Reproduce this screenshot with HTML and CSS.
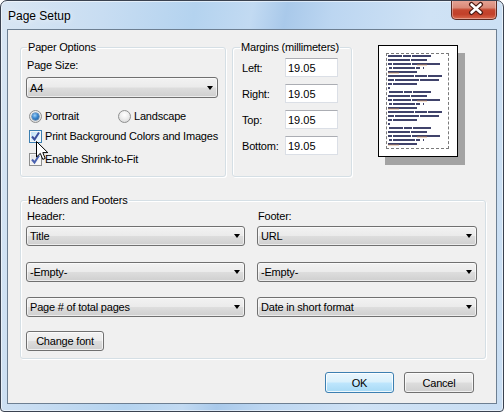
FILE: index.html
```html
<!DOCTYPE html>
<html lang="en">
<head>
  <meta charset="UTF-8">
  <title>Page Setup</title>
  <link rel="stylesheet" href="styles.css">
</head>
<body>
  <div class="window">
    <div class="titlebar">
      <span class="title">Page Setup</span>
      <button class="close" aria-label="Close">
        <svg width="46" height="20" viewBox="0 0 46 20">
          <path d="M19.5 5.5 L28.5 13.5 M28.5 5.5 L19.5 13.5" stroke="#4a1a12" stroke-width="5" stroke-linecap="round"/>
          <path d="M19.5 5.5 L28.5 13.5 M28.5 5.5 L19.5 13.5" stroke="#fff" stroke-width="2.6" stroke-linecap="round"/>
        </svg>
      </button>
    </div>

    <div class="client">
      <div class="top">
        <fieldset class="group paper">
          <legend>Paper Options</legend>
          <label class="lbl">Page Size:</label>
          <div class="combo tall">A4</div>
          <div class="radios">
            <span class="opt first"><span class="radio on"></span>Portrait</span>
            <span class="opt"><span class="radio"></span>Landscape</span>
          </div>
          <div class="check hot">
            <span class="box"><svg width="11" height="11" viewBox="0 0 11 11"><path d="M2 5.5 L4.5 8.5 L9 1.5" fill="none" stroke="#3a4f9e" stroke-width="2"/></svg></span>
            Print Background Colors and Images
          </div>
          <div class="check second">
            <span class="box"><svg width="11" height="11" viewBox="0 0 11 11"><path d="M2 5.5 L4.5 8.5 L9 1.5" fill="none" stroke="#4a62b0" stroke-width="2"/></svg></span>
            Enable Shrink-to-Fit
          </div>
        </fieldset>

        <fieldset class="group margins">
          <legend>Margins (millimeters)</legend>
          <div class="mrow"><label>Left:</label><input type="text" value="19.05"></div>
          <div class="mrow"><label>Right:</label><input type="text" value="19.05"></div>
          <div class="mrow"><label>Top:</label><input type="text" value="19.05"></div>
          <div class="mrow"><label>Bottom:</label><input type="text" value="19.05"></div>
        </fieldset>

        <div class="preview">
          <div class="page">
            <div class="printable">
              <svg width="61" height="94" viewBox="0 0 61 94">
                <g stroke="#2c2f5c" stroke-width="2">
                  <path d="M1 2 H44" stroke-dasharray="14 1 8 1 20"/>
                  <path d="M1 6 H40" stroke-dasharray="22 1 16"/>
                  <path d="M1 10 H53" stroke-dasharray="4 1 18 1 28"/>
                  <path d="M2 14 H48" stroke-dasharray="3 1 22 1 4"/>
                  <path d="M1 18 H30"/>
                  <path d="M1 22 H55" stroke-dasharray="26 1 12 1 14"/>
                  <path d="M1 26 H52" stroke-dasharray="6 1 24 1 20"/>
                  <path d="M1 30 H30" stroke-dasharray="4 1 25"/>
                  <path d="M1 34 H3"/>
                  <path d="M2 38 H44" stroke-dasharray="14 1 8 1 20"/>
                  <path d="M1 42 H40" stroke-dasharray="22 1 16"/>
                  <path d="M1 46 H53" stroke-dasharray="4 1 18 1 28"/>
                  <path d="M2 50 H48" stroke-dasharray="3 1 22 1 4"/>
                  <path d="M1 54 H30"/>
                  <path d="M1 58 H55" stroke-dasharray="26 1 12 1 14"/>
                  <path d="M1 62 H52" stroke-dasharray="6 1 24 1 20"/>
                  <path d="M1 66 H30" stroke-dasharray="4 1 25"/>
                  <path d="M1 70 H3"/>
                  <path d="M2 74 H44" stroke-dasharray="14 1 8 1 20"/>
                  <path d="M1 78 H40" stroke-dasharray="22 1 16"/>
                  <path d="M1 82 H53" stroke-dasharray="4 1 18 1 28"/>
                  <path d="M2 86 H48" stroke-dasharray="3 1 22 1 4"/>
                  <path d="M1 90 H30"/>
                </g>
                <g stroke="#d08a4a" stroke-width="1" opacity="0.7">
                  <path d="M1 19 H12 M1 55 H12 M1 91 H12"/>
                  <path d="M30 11 H40 M30 47 H40 M30 83 H40"/>
                </g>
              </svg>
            </div>
          </div>
        </div>
      </div>

      <fieldset class="group hf">
        <legend>Headers and Footers</legend>
        <div class="hf-grid">
          <label class="lbl">Header:</label>
          <label class="lbl">Footer:</label>
          <div class="combo">Title</div>
          <div class="combo">URL</div>
          <div class="combo">-Empty-</div>
          <div class="combo">-Empty-</div>
          <div class="combo">Page # of total pages</div>
          <div class="combo">Date in short format</div>
        </div>
        <button class="btn font-btn">Change font</button>
      </fieldset>

      <div class="actions">
        <button class="btn ok">OK</button>
        <button class="btn cancel">Cancel</button>
      </div>

      <!-- mouse pointer over the first checkbox -->
      <svg class="cursor" width="13" height="20" viewBox="0 0 13 20">
        <path d="M0.5 0.5 L0.5 16 L4.3 12.4 L6.8 18.4 L9.2 17.4 L6.8 11.6 L11.8 11.6 Z" fill="#fff" stroke="#000" stroke-width="1"/>
      </svg>
    </div>
  </div>
</body>
</html>
```

FILE: styles.css
```css
/* base */
* { box-sizing: border-box; }
body {
  margin: 0;
  background: #fff;
  font-family: "Liberation Sans", Arial, sans-serif;
  font-size: 11px;
  letter-spacing: -0.2px;
  color: #000;
}

/* window frame */
.window {
  width: 504px;
  height: 412px;
  border: 1px solid #3a4250;
  border-radius: 7px 7px 4px 4px;
  background: linear-gradient(100deg, #d9e6f3 0%, #c8ddf2 18%, #b4d3ef 34%, #c2daf2 44%, #a9c9ea 50%, #bcd6f1 58%, #cfe2f5 75%, #c9def3 100%);
  box-shadow: inset 0 0 0 1px rgba(255,255,255,0.55);
  display: flex;
  flex-direction: column;
  overflow: hidden;
}
.titlebar {
  height: 28px;
  display: flex;
  align-items: center;
  justify-content: space-between;
  padding-left: 7px;
  flex-shrink: 0;
}
.title {
  font-size: 12px;
  letter-spacing: 0;
  margin-top: 2px;
  text-shadow: 0 0 6px rgba(255,255,255,0.9);
}
.close {
  align-self: flex-start;
  margin-top: -1px;
  margin-right: 6px;
  width: 46px;
  height: 20px;
  padding: 0;
  border: 1px solid #5a2a22;
  border-top: none;
  border-radius: 0 0 5px 5px;
  background: linear-gradient(#e6a597 0%, #d98a78 40%, #c5472f 52%, #c2402a 75%, #d8694d 100%);
  box-shadow: inset 0 0 0 1px rgba(255,255,255,0.35);
}
.close svg { display: block; margin-top: -1px; }

/* client area */
.client {
  position: relative;
  flex: 1;
  margin: 0 6px 7px 6px;
  border: 1px solid #6d7f92;
  background: #f0f0f0;
  padding: 10px 10px 0 12px;
}
.top {
  display: flex;
  align-items: stretch;
}

/* group boxes */
.group {
  margin: 0;
  min-width: 0;
  border: 1px solid #d5dfe5;
  border-radius: 3px;
  box-shadow: inset 1px 1px 0 #fff, 1px 1px 0 #fff;
}
.group legend {
  padding: 0 1px;
  margin-left: 1px;
  line-height: 14px;
  white-space: nowrap;
}
.lbl {
  display: block;
  line-height: 14px;
  padding-left: 1px;
}

.paper {
  width: 206px;
  margin-right: 6px;
  padding: 4px 7px 10px 5px;
}
.margins {
  width: 120px;
  padding: 4px 13px 8px 9px;
}
.margins legend { margin-left: -2px; }

/* combo boxes */
.combo {
  height: 20px;
  display: flex;
  align-items: center;
  padding-left: 3px;
  border: 1px solid #707070;
  border-radius: 3px;
  background: linear-gradient(#f2f2f2 0%, #ebebeb 48%, #dddddd 52%, #cfcfcf 100%);
  box-shadow: inset 0 0 0 1px rgba(255,255,255,0.6);
}
.combo::after {
  content: "";
  margin-left: auto;
  margin-right: 4px;
  border-left: 3.5px solid transparent;
  border-right: 3.5px solid transparent;
  border-top: 4px solid #000;
}
.combo.tall {
  height: 21px;
  margin-top: 5px;
}

/* radio buttons */
.radios {
  display: flex;
  align-items: center;
  height: 14px;
  margin-top: 11px;
  padding-left: 3px;
}
.opt {
  display: flex;
  align-items: center;
  gap: 3px;
}
.opt.first { width: 89px; }
.radio {
  width: 13px;
  height: 13px;
  border-radius: 50%;
  border: 1px solid #8e8f8f;
  background: radial-gradient(circle at 50% 35%, #ffffff 0%, #eeeeee 45%, #d2d2d2 100%);
  display: flex;
  align-items: center;
  justify-content: center;
}
.radio.on::after {
  content: "";
  width: 7px;
  height: 7px;
  border-radius: 50%;
  background: radial-gradient(circle at 40% 35%, #9fd0f7 0%, #3a87cf 45%, #1b4f8a 100%);
  box-shadow: 0 0 0 0.5px #235a94;
}

/* check boxes */
.check {
  display: flex;
  align-items: center;
  gap: 3px;
  height: 13px;
  line-height: 13px;
  margin-top: 7px;
  padding-left: 3px;
}
.check.second { margin-top: 10px; }
.box {
  width: 13px;
  height: 13px;
  border: 1px solid #8e8f8f;
  background: linear-gradient(135deg, #dcdcdc 0%, #f4f4f4 60%, #ffffff 100%);
  box-shadow: inset 0 0 0 1px #f6f6f6;
  display: flex;
  align-items: center;
  justify-content: center;
}
.check.hot .box {
  border-color: #3c7fb1;
  background: linear-gradient(135deg, #b5dcf6 0%, #e2f2fc 60%, #f5fbfe 100%);
}

/* margin fields */
.mrow {
  display: flex;
  align-items: flex-start;
  height: 19px;
  margin-bottom: 7px;
}
.mrow label {
  width: 43px;
  line-height: 14px;
  padding-top: 3px;
}
.mrow input {
  width: 53px;
  height: 19px;
  margin: 0;
  padding: 1px 0 0 2px;
  border: 1px solid #dbdfe6;
  border-top-color: #abadb3;
  font-family: "Liberation Sans", Arial, sans-serif;
  font-size: 11px;
  color: #000;
  background: #fff;
}

/* preview */
.preview {
  margin-left: 26px;
  padding-top: 5px;
}
.page {
  width: 80px;
  height: 112px;
  border: 1px solid #000;
  background: #fff;
  box-shadow: 7px 8px 0 #a3a3a3;
  padding: 7px 0 0 7px;
}
.printable {
  width: 63px;
  height: 96px;
  border: 1px dashed #7a7a7a;
  padding: 0 0 0 0;
}
.printable svg { display: block; opacity: 0.9; }

/* headers and footers */
.hf {
  margin-top: 16px;
  padding: 2px 8px 7px 5px;
}
.hf-grid {
  display: grid;
  grid-template-columns: 219px 220px;
  grid-template-rows: 14px 23px 36px 35px;
  column-gap: 12px;
  align-items: end;
}
.hf-grid .lbl { align-self: start; }

/* push buttons */
.btn {
  height: 20px;
  padding: 0;
  border: 1px solid #707070;
  border-radius: 3px;
  background: linear-gradient(#f2f2f2 0%, #ebebeb 48%, #dddddd 52%, #cfcfcf 100%);
  box-shadow: inset 0 0 0 1px rgba(255,255,255,0.7);
  font-family: "Liberation Sans", Arial, sans-serif;
  font-size: 11px;
  letter-spacing: -0.2px;
  color: #000;
}
.font-btn {
  display: block;
  width: 78px;
  margin-top: 14px;
}
.actions {
  display: flex;
  justify-content: flex-end;
  gap: 10px;
  margin-top: 13px;
  margin-right: 12px;
}
.actions .btn { height: 21px; }
.ok {
  width: 69px;
  border-color: #3c7fb1;
  background: linear-gradient(#eaf6fd 0%, #d9f0fc 48%, #bee6fd 52%, #a7d9f5 100%);
  box-shadow: inset 0 0 0 1px rgba(255,255,255,0.8);
}
.cancel { width: 70px; }

.cursor {
  position: absolute;
  left: 28px;
  top: 111px;
}
```
